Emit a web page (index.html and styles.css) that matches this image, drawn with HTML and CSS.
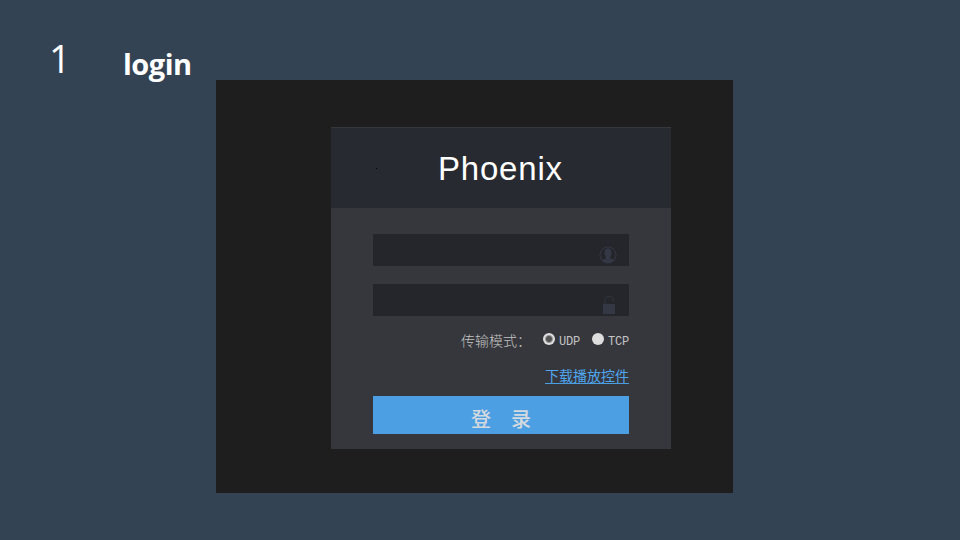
FILE: index.html
```
<!DOCTYPE html>
<html lang="zh-CN">
<head>
<meta charset="utf-8">
<title>login</title>
<link rel="stylesheet" href="styles.css">
</head>
<body>
<header class="slide-head"><span class="number">1</span><h1 class="title">login</h1></header>
<main class="stage">
  <form class="card">
    <div class="brand"><span class="brand-dot"></span><span class="brand-name">Phoenix</span></div>
    <div class="fields">
      <div class="field">
        <svg class="user" width="18" height="18" viewBox="0 0 18 18"><circle cx="9" cy="9" r="8" fill="none" stroke="#343844" stroke-width="1"/><path fill="#343844" d="M9 2.500c2.400 0 3.500 1.500 3.500 3.900 0 1.800-.5 3.400-1.300 4.200v1.800c1 .7 3 .9 4.200 1.800A8 8 0 0 1 9 17a8 8 0 0 1-6.400-2.800c1.200-.9 3.200-1.100 4.200-1.800v-1.800c-.8-.8-1.300-2.400-1.300-4.200C5.500 4 6.600 2.500 9 2.500z"/></svg>
      </div>
      <div class="field">
        <svg class="lock" width="12" height="19" viewBox="0 0 12 19"><path d="M2 9V5.500C2 2.500 3.600 1.300 6 1.300s4.300 1.400 4.300 4.200V7" fill="none" stroke="#343740" stroke-width="1"/><path fill="#343844" d="M0 9h12v10H0z"/></svg>
      </div>
      <div class="mode">
        <span class="mode-label">传输模式：</span>
        <i class="radio checked"></i><span class="option udp">UDP</span>
        <i class="radio"></i><span class="option">TCP</span>
      </div>
      <a class="download">下载播放控件</a>
      <div class="submit"><span>登</span><span>录</span></div>
    </div>
  </form>
</main>
</body>
</html>
```
FILE: styles.css
```
* { box-sizing: border-box; }
body { margin: 0; width: 960px; height: 540px; overflow: hidden; background: #344353; font-family: "Liberation Sans", "Noto Sans CJK SC", sans-serif; }
.slide-head { height: 80px; display: flex; color: #fff; }
.number { width: 123px; padding: 37px 0 0 49px; font: 38px/42px "Open Sans", sans-serif; }
.title { margin: 0; padding-top: 44px; font: bold 29px/40px "Open Sans", "Noto Sans", sans-serif; letter-spacing: -.5px; }
.stage { width: 517px; height: 413px; margin-left: 216px; padding: 47px 0 0 115px; background: #1e1e1e; }
.card { width: 340px; height: 322px; background: #36373c; }
.brand { height: 81px; border-top: 1px solid #36373c; background: #272a31; display: flex; align-items: center; padding-left: 45px; }
.brand-dot { width: 1px; height: 1px; background: #000; }
.brand-name { margin-left: 61px; padding-top: 1px; color: #fff; font-size: 33px; line-height: 38px; letter-spacing: .8px; }
.fields { padding: 26px 42px 0; display: flex; flex-direction: column; }
.field { height: 32px; margin-bottom: 18px; background: #25262b; display: flex; justify-content: flex-end; }
.user { margin: 12px 12px 0 0; }
.lock { margin: 11px 14px 0 0; }
.mode { height: 20px; margin-top: -4px; padding-left: 88px; display: flex; color: #c4c4c5; font: 300 14px/20px "Noto Sans CJK SC", sans-serif; }
.mode-label { width: 82px; white-space: nowrap; }
.radio { flex: none; width: 12px; height: 12px; margin: 3px 4px 0 0; border-radius: 50%; background: #dedede; }
.checked { background: radial-gradient(circle, #555 0 2.500px, #999 3.500px, #dedede 4.500px); }
.option { padding-top: 2px; font: 12px/20px "Liberation Mono", monospace; letter-spacing: -.2px; width: 21px; }
.udp { margin-right: 12px; }
.download { align-self: flex-end; margin-top: 15px; height: 19px; border-bottom: 1px solid #4b9de2; color: #4fa6ef; font: 400 14px/20px "Noto Sans CJK SC", sans-serif; }
.submit { height: 38px; margin-top: 12px; padding-top: 4px; background: #4d9fe3; color: #d5dade; display: flex; justify-content: center; gap: 20px; font: 500 20px/38px "Noto Sans CJK SC", sans-serif; }
```
